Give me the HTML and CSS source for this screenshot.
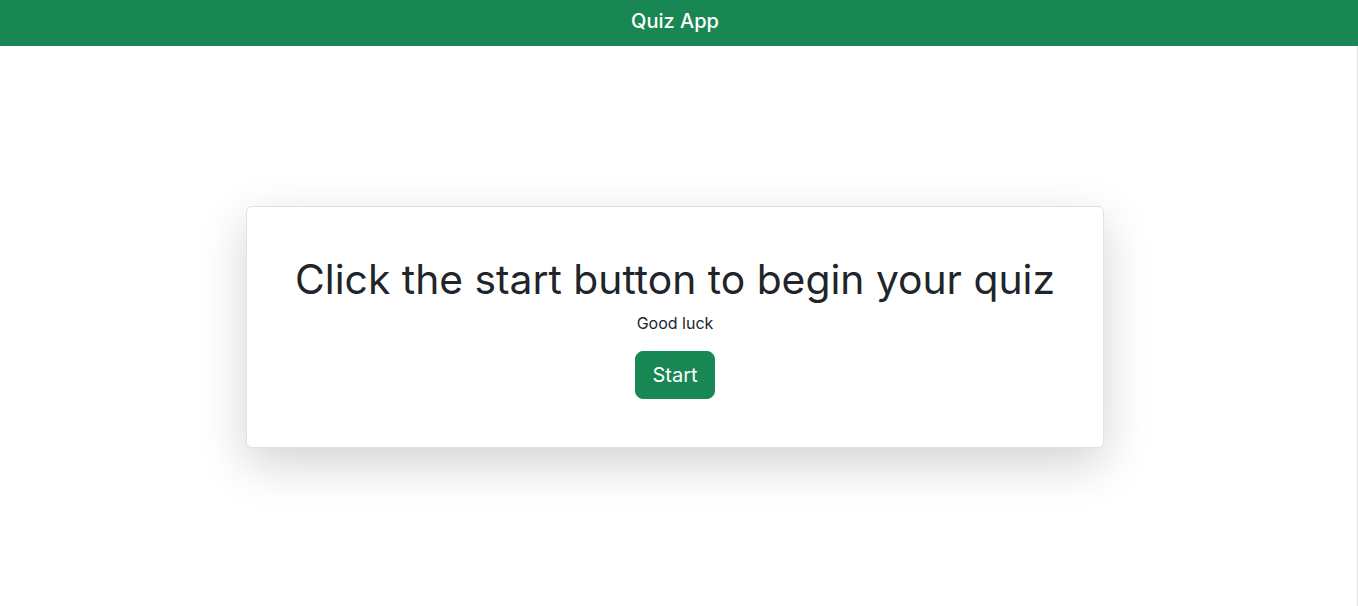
FILE: index.html
```html
<!DOCTYPE html>
<html lang="en">
<head>
<meta charset="utf-8">
<title>Quiz App</title>
<link rel="stylesheet" href="styles.css">
</head>
<body>
<header class="topbar">
  <span class="brand">Quiz App</span>
</header>
<main class="stage">
  <section class="card">
    <h1 class="title">Click the start button to begin your quiz</h1>
    <p class="subtitle">Good luck</p>
    <button class="btn-start" type="button">Start</button>
  </section>
</main>
</body>
</html>
```
FILE: styles.css
```css
* { box-sizing: border-box; }
html, body { margin: 0; padding: 0; height: 100%; }
body {
  font-family: Inter, "Noto Sans", "Liberation Sans", sans-serif;
  color: #212529;
  background: #fff;
  display: flex;
  flex-direction: column;
  overflow: hidden;
}
.topbar {
  height: 46px;
  background: #198754;
  color: #fff;
  display: flex;
  align-items: center;
  justify-content: center;
  padding-right: 8px;
  padding-bottom: 4px;
  flex: none;
}
.brand {
  font-size: 20px;
  font-weight: 500;
}
.stage {
  flex: 1;
  display: flex;
  align-items: center;
  justify-content: center;
  padding-right: 7px;
  border-right: 1px solid #dee2e6;
}
.card {
  width: 858px;
  border: 1px solid #dee2e6;
  border-radius: 6px;
  background: #fff;
  box-shadow: 0 1rem 3rem rgba(0, 0, 0, .175);
  padding: 48px;
  text-align: center;
  margin-top: 1px;
}
.title {
  margin: 0 0 8px;
  font-size: 40.8px;
  font-weight: 400;
  line-height: 48px;
  white-space: nowrap;
}
.subtitle {
  margin: 0 0 16px;
  font-size: 16px;
  line-height: 24px;
}
.btn-start {
  font-family: inherit;
  font-size: 20px;
  line-height: 1.5;
  padding: 8px 16px;
  border: 1px solid #198754;
  border-radius: 8px;
  background: #198754;
  color: #fff;
  cursor: pointer;
}
```
